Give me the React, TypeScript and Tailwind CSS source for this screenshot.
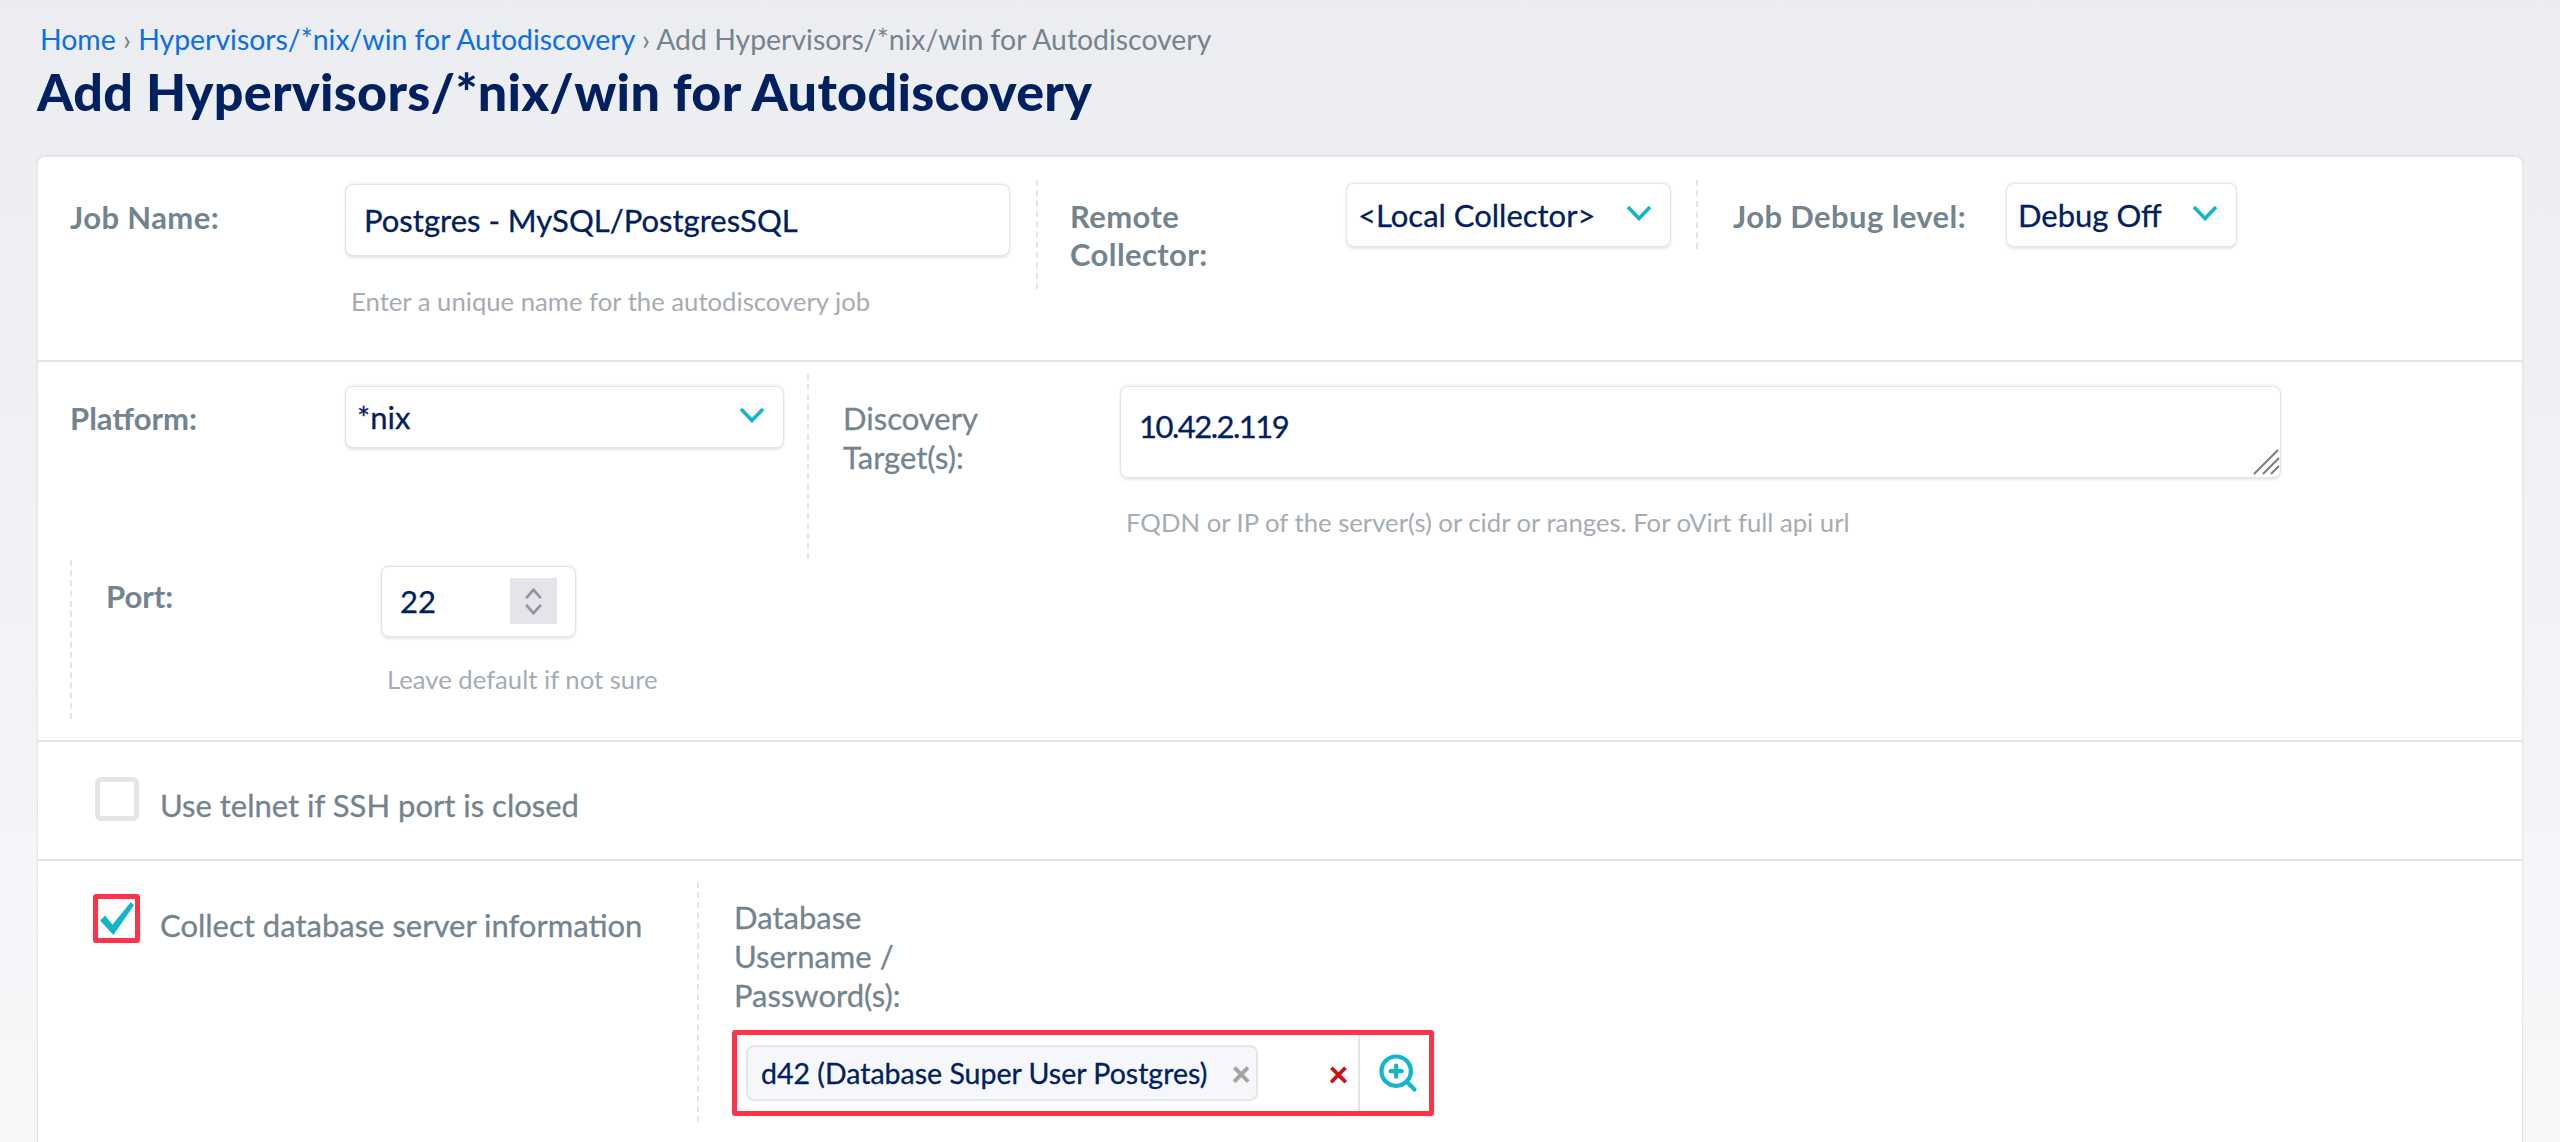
import { ZoomIn } from "lucide-react";

const font = "font-['Lato','Liberation_Sans',sans-serif]";
const label = "text-[31px] leading-[39px] text-[#74848f] [-webkit-text-stroke-width:0.3px]";
const strong = "text-[31px] leading-[38px] font-bold text-[#74848f] tracking-[0.4px]";
const field = "rounded-[8px] bg-white border border-[#e2e4e9] shadow-[0_-2px_2px_rgba(0,0,0,0.04),0_2px_3px_rgba(0,0,0,0.1)] text-[31px] text-[#00205f] [-webkit-text-stroke-width:0.3px]";
const help = "text-[25.7px] leading-[30px] text-[#a5acb3]";

function Chevron({ className }: { className: string }) {
  return (
    <svg viewBox="0 0 26 16" className={className} fill="none" stroke="#12b5c9" strokeWidth="3.6">
      <polyline points="2,2 13,13.5 24,2" />
    </svg>
  );
}

function Dash({ className }: { className: string }) {
  return <div className={`shrink-0 border-l-2 border-dashed border-[#e3e5e9] ${className}`} />;
}

function Select({ text, className }: { text: string; className: string }) {
  return (
    <div className={`${field} flex items-center justify-between pl-[11px] pr-[18px] ${className}`}>
      <span>{text}</span>
      <Chevron className="w-[26px] h-[16px] mb-[4px]" />
    </div>
  );
}

export default function App() {
  return (
    <div className={`${font} h-[1142px] overflow-hidden bg-gradient-to-b from-[#ecedf1] to-[#f7f8fa] pl-[37px] pr-[37px]`}>
      {/* Breadcrumb and title */}
      <div className="pt-[21px] pl-[3px] text-[28.4px] leading-[36px] text-[#74848f] whitespace-nowrap">
        <a className="text-[#0a6fe8]">Home</a> › <a className="text-[#0a6fe8]">Hypervisors/*nix/win for Autodiscovery</a> › Add Hypervisors/*nix/win for Autodiscovery
      </div>
      <h1 className="text-[52px] leading-[56px] font-black text-[#00205f] tracking-[0.3px] whitespace-nowrap mt-[6px]">
        Add Hypervisors/*nix/win for Autodiscovery
      </h1>

      <div className="mt-[37px] w-[2486px] h-[1000px] bg-white rounded-t-[8px] border border-[#e4e6ea] shadow-[0_-1px_3px_rgba(0,0,0,0.05)]">
        {/* Job name row */}
        <div className="h-[205px] border-b-2 border-[#e2e5ea] pt-[23px] pl-[32px] flex items-start">
          <div className={`${strong} w-[275px] pt-[18px]`}>Job Name:</div>
          <div className="w-[665px] mr-[26px] pt-[4px]">
            <input readOnly value="Postgres - MySQL/PostgresSQL" className={`${field} w-full h-[72px] px-[18px] outline-none`} />
            <div className={`${help} pl-[6px] mt-[30px]`}>Enter a unique name for the autodiscovery job</div>
          </div>
          <Dash className="h-[109px]" />
          <div className={`${strong} w-[276px] ml-[32px] pt-[17px]`}>Remote<br />Collector:</div>
          <Select text="<Local Collector>" className="w-[325px] h-[64px] mt-[3px]" />
          <Dash className="h-[69px] ml-[25px]" />
          <div className={`${strong} w-[273px] ml-[35px] pt-[17px]`}>Job Debug level:</div>
          <Select text="Debug Off" className="w-[231px] h-[64px] mt-[3px]" />
        </div>

        {/* Platform and targets */}
        <div className="h-[380px] border-b-2 border-[#e2e5ea] pt-[24px]">
          <div className="flex items-start pl-[32px] h-[174px]">
            <div className={`${strong} w-[275px] pt-[13px] tracking-[0px]`}>Platform:</div>
            <Select text="*nix" className="w-[439px] h-[62px]" />
            <Dash className="h-[185px] ml-[23px] -mt-[12px]" />
            <div className={`${label} w-[277px] ml-[34px] pt-[13px]`}>Discovery<br />Target(s):</div>
            <div>
              <div className={`${field} relative w-[1161px] h-[92px] pl-[18px] pt-[16px] tracking-[-1.5px]`}>
                10.42.2.119
                <svg viewBox="0 0 28 26" className="absolute right-0 bottom-[2px] w-[28px] h-[26px]" stroke="#777" strokeWidth="1.8">
                  <line x1="2" y1="25" x2="26" y2="1" />
                  <line x1="11" y1="25" x2="27" y2="9" />
                  <line x1="19" y1="25" x2="27" y2="17" />
                </svg>
              </div>
              <div className={`${help} pl-[6px] mt-[29px]`}>FQDN or IP of the server(s) or cidr or ranges. For oVirt full api url</div>
            </div>
          </div>
          <div className="flex items-start pl-[32px]">
            <Dash className="h-[159px]" />
            <div className={`${strong} w-[275px] ml-[34px] pt-[17px] tracking-[0px]`}>Port:</div>
            <div>
              <div className={`${field} relative w-[195px] h-[71px] flex items-center pl-[18px] mt-[6px]`}>
                22
                <div className="absolute right-[18px] top-[11px] w-[47px] h-[46px] bg-[#e4e4ea] flex flex-col items-center justify-center gap-[5px]">
                  <svg viewBox="0 0 20 12" className="w-[19px] h-[11px]" fill="none" stroke="#94949f" strokeWidth="3"><polyline points="2,11 10,2 18,11" /></svg>
                  <svg viewBox="0 0 20 12" className="w-[19px] h-[11px]" fill="none" stroke="#94949f" strokeWidth="3"><polyline points="2,1 10,10 18,1" /></svg>
                </div>
              </div>
              <div className={`${help} pl-[6px] mt-[27px]`}>Leave default if not sure</div>
            </div>
          </div>
        </div>

        {/* Telnet */}
        <div className="h-[119px] border-b-2 border-[#e2e5ea] flex items-start pl-[57px]">
          <div className="w-[44px] h-[44px] rounded-[6px] border-[5px] border-[#e2e5ea] bg-white mt-[35px] mr-[21px]" />
          <div className={`${label} mt-[44px]`}>Use telnet if SSH port is closed</div>
        </div>

        {/* Database credentials */}
        <div className="flex items-start pt-[21px] pl-[55px]">
          <div className="relative w-[47px] h-[49px] border-[5px] border-[#fb3448] rounded-[3px] mt-[12px] mr-[20px] shrink-0">
            <svg viewBox="0 0 36 38" className="w-full h-full">
              <polygon points="2,21 7,16 14,25 32,3 35,6 15,35" fill="#12b5c9" />
            </svg>
          </div>
          <div className={`${label} w-[537px] mt-[24px] text-[31.5px]`}>Collect database server information</div>
          <Dash className="h-[240px]" />
          <div className="ml-[33px] mt-[16px]">
            <div className={`${label} text-[31.5px] pl-[2px]`}>Database<br />Username /<br />Password(s):</div>
            <div className="mt-[15px] w-[702px] h-[86px] border-[5px] border-[#fb3448] rounded-[3px] flex items-center pl-[9px]">
              <div className="shrink-0 w-[512px] h-[56px] rounded-[8px] bg-[#f6f7fa] border-2 border-[#e4e6ea] flex items-center pl-[13px] text-[28.5px] text-[#00205f] [-webkit-text-stroke-width:0.3px] whitespace-nowrap">
                d42 (Database Super User Postgres)
                <span className="ml-[24px] text-[34px] font-black leading-none text-[#a3a3a3]">×</span>
              </div>
              <span className="shrink-0 ml-[70px] text-[36px] font-black leading-none text-[#cc1010]">×</span>
              <div className="shrink-0 ml-[9px] h-full w-[74px] border-l-2 border-[#e2e4e8] flex items-center justify-center pl-[4px]">
                <ZoomIn className="w-[44px] h-[44px] text-[#12b5c9]" strokeWidth={2.3} />
              </div>
            </div>
          </div>
        </div>
      </div>
    </div>
  );
}
